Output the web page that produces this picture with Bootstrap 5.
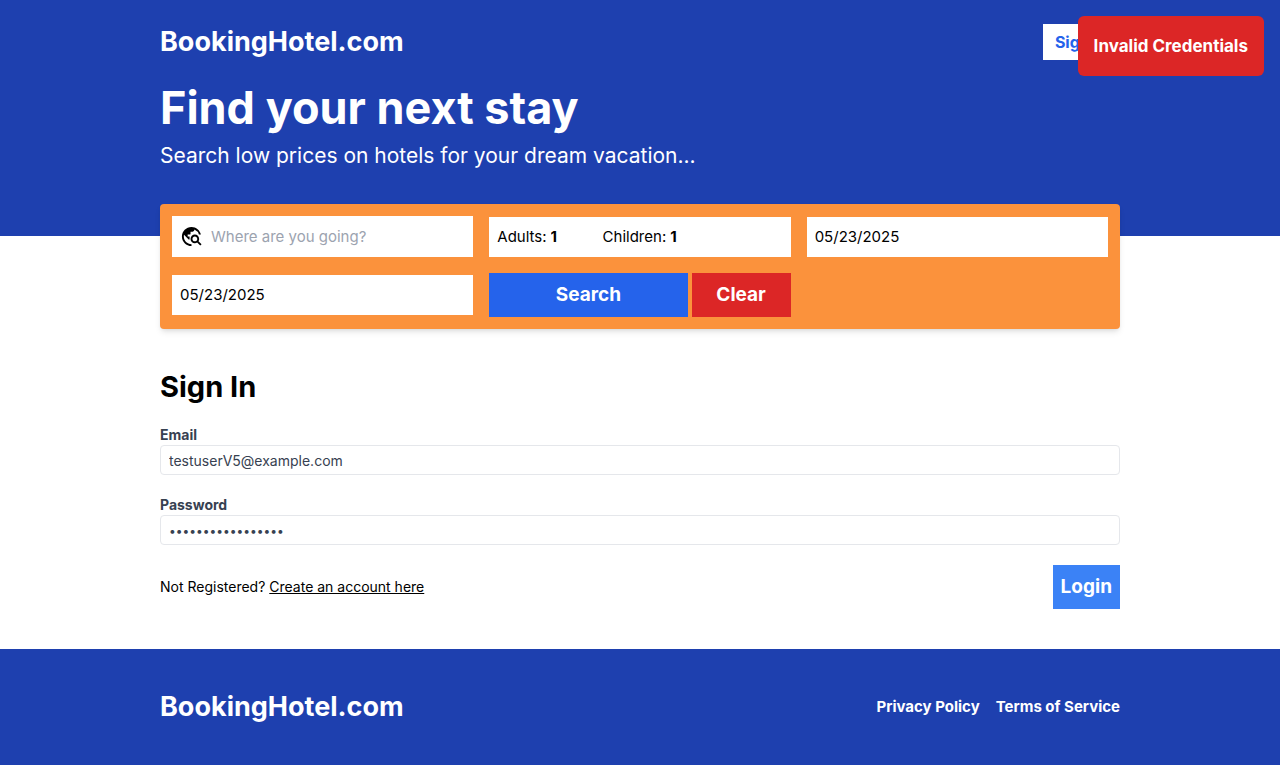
<!DOCTYPE html>
<html lang="en">
<head>
<meta charset="utf-8">
<meta name="viewport" content="width=device-width, initial-scale=1">
<title>BookingHotel.com – Sign In</title>
<link href="https://cdn.jsdelivr.net/npm/bootstrap@5.3.0/dist/css/bootstrap.min.css" rel="stylesheet">
<style>
  body { font-family: Inter, "Liberation Sans", sans-serif; line-height: 24px; color: #000; background: #fff; }
  .band { background: #1e40af; color: #fff; }
  .page-width { width: 75%; margin-inline: auto; }
  .brand { font-size: 27px; line-height: 36px; font-weight: 700; color: #fff; text-decoration: none; }
  .signin-link { padding-inline: 12px; background: #fff; color: #2563eb; font-weight: 700; line-height: 36px; text-decoration: none; }
  .hero { padding-bottom: 64px; }
  .hero h1 { font-size: 45px; line-height: 48px; font-weight: 700; }
  .hero p { font-size: 21px; line-height: 32px; }
  .search-panel { display: grid; grid-template-columns: repeat(3, 1fr); align-items: center; gap: 16px; padding: 12px; margin-top: -32px; background: #fb923c; border-radius: 4px; box-shadow: 0 4px 6px -1px rgba(0,0,0,.1), 0 2px 4px -2px rgba(0,0,0,.1); font-size: 15px; }
  .bare { border: 0; border-radius: 0; outline: 0; background: #fff; color: #000; min-width: 0; line-height: 24px; }
  .bare::placeholder { color: #9ca3af; opacity: 1; }
  .where svg { width: 23px; height: 25px; }
  .guests input { width: 48px; font-weight: 700; appearance: textfield; }
  .guests input::-webkit-inner-spin-button { display: none; }
  .action { border: 0; color: #fff; font-size: 19px; line-height: 28px; font-weight: 700; padding: 8px; }
  .go { background: #2563eb; flex: 2 1 0; padding-inline: 0; }
  .clear { background: #dc2626; flex: 1 1 0; padding-inline: 0; }
  .login { background: #3b82f6; }
  .signin { display: flex; flex-direction: column; gap: 20px; margin-block: 40px; font-size: 14px; line-height: 20px; }
  .signin h2 { font-size: 29px; line-height: 36px; font-weight: 700; }
  .signin label { color: #374151; font-weight: 700; }
  .field { border: 1px solid #e5e7eb; border-radius: 4px; padding: 4px 8px; color: #374151; height: 30px; }
  .field[type="password"] { font-size: 12px; }
  .site-footer { padding-block: 40px; }
  .footer-link { color: #fff; font-size: 15px; font-weight: 700; text-decoration: none; }
  .notice { position: fixed; top: 16px; right: 16px; z-index: 50; padding: 16px; border-radius: 6px; background: #dc2626; color: #fff; font-size: 17px; line-height: 28px; font-weight: 700; }
</style>
</head>
<body>
<header class="band">
  <div class="page-width py-4 d-flex justify-content-between">
    <a class="brand" href="#">BookingHotel.com</a>
    <a class="signin-link" href="#signin">Sign In</a>
  </div>
  <div class="page-width hero">
    <h1 class="mb-2">Find your next stay</h1>
    <p class="mb-0">Search low prices on hotels for your dream vacation...</p>
  </div>
</header>

<main class="page-width">
  <form class="search-panel">
    <div class="where d-flex align-items-center bg-white p-2">
      <svg class="me-2 flex-shrink-0" viewBox="0 0 24 24" fill="currentColor" aria-hidden="true"><path d="M19.3 16.9c.4-.7.7-1.5.7-2.4 0-2.5-2-4.5-4.5-4.5S11 12 11 14.5s2 4.5 4.5 4.5c.9 0 1.7-.3 2.4-.7l3.2 3.2 1.4-1.4-3.2-3.2zm-3.8.1c-1.4 0-2.5-1.1-2.5-2.5s1.1-2.5 2.5-2.5 2.5 1.1 2.5 2.5-1.1 2.5-2.5 2.5zM12 20v2C6.48 22 2 17.52 2 12S6.48 2 12 2c4.84 0 8.87 3.44 9.8 8h-2.07A8 8 0 0 0 15 4.59V5c0 1.1-.9 2-2 2h-2v2c0 .55-.45 1-1 1H8v2h2v3H9l-4.79-4.79C4.08 10.79 4 11.38 4 12c0 4.41 3.59 8 8 8z"/></svg>
      <input class="bare w-100 p-0" type="text" placeholder="Where are you going?" aria-label="Destination">
    </div>
    <div class="guests d-flex gap-2 bg-white px-2 py-1">
      <label class="d-flex align-items-center">Adults:<input class="bare p-1" type="number" min="1" max="20" value="1"></label>
      <label class="d-flex align-items-center">Children:<input class="bare p-1" type="number" min="0" max="20" value="1"></label>
    </div>
    <input class="bare w-100 p-2" type="text" value="05/23/2025" aria-label="Check-in date">
    <input class="bare w-100 p-2" type="text" value="05/23/2025" aria-label="Check-out date">
    <div class="d-flex gap-1">
      <button class="action go" type="submit">Search</button>
      <button class="action clear" type="reset">Clear</button>
    </div>
  </form>

  <form class="signin" id="signin">
    <h2 class="mb-0">Sign In</h2>
    <div class="d-flex flex-column">
      <label for="email">Email</label>
      <input class="field" id="email" type="email" value="testuserV5@example.com">
    </div>
    <div class="d-flex flex-column">
      <label for="password">Password</label>
      <input class="field" id="password" type="password" value="examplepassword12">
    </div>
    <div class="d-flex justify-content-between align-items-center">
      <span>Not Registered? <a class="text-reset" href="#">Create an account here</a></span>
      <button class="action login" type="submit">Login</button>
    </div>
  </form>
</main>

<footer class="band">
  <div class="page-width site-footer d-flex justify-content-between align-items-center">
    <a class="brand" href="#">BookingHotel.com</a>
    <nav class="d-flex gap-3">
      <a class="footer-link" href="#">Privacy Policy</a>
      <a class="footer-link" href="#">Terms of Service</a>
    </nav>
  </div>
</footer>

<div class="notice" role="alert">Invalid Credentials</div>
<script src="https://cdn.jsdelivr.net/npm/bootstrap@5.3.0/dist/js/bootstrap.bundle.min.js"></script>
</body>
</html>
